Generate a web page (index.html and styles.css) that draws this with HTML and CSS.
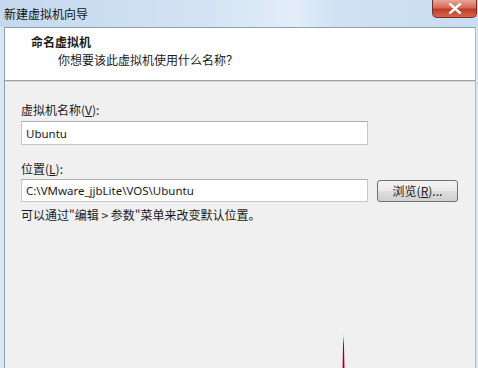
FILE: index.html
```html
<!DOCTYPE html>
<html lang="zh-CN">
<head>
    <meta charset="UTF-8">
    <title>新建虚拟机向导</title>
    <link rel="stylesheet" href="styles.css">
</head>
<body>
    <div class="window">
        <div class="titlebar">
            <span class="title">新建虚拟机向导</span>
            <button class="close-btn" aria-label="关闭">
                <svg width="14" height="11" viewBox="0 0 14 11">
                    <path d="M2 1 L12 10 M12 1 L2 10" stroke="#ffffff" stroke-width="2.4" stroke-linecap="round"/>
                </svg>
            </button>
        </div>
        <div class="frame">
            <div class="panel">
                <div class="header">
                    <div class="header-title">命名虚拟机</div>
                    <div class="header-sub">你想要该此虚拟机使用什么名称？</div>
                </div>
                <div class="content">
                    <label class="field-label" for="vmName">虚拟机名称(<u>V</u>):</label>
                    <input class="text-input" id="vmName" type="text" value="Ubuntu" spellcheck="false">

                    <label class="field-label field-gap" for="vmPath">位置(<u>L</u>):</label>
                    <div class="path-row">
                        <input class="text-input path-input" id="vmPath" type="text" value="C:\VMware_jjbLite\VOS\Ubuntu" spellcheck="false">
                        <button class="browse-btn">浏览(<u>R</u>)...</button>
                    </div>
                    <div class="hint">可以通过"编辑 &gt; 参数"菜单来改变默认位置。</div>
                </div>
            </div>
        </div>
    </div>
    <!-- 截图上的红色标注箭头 -->
    <div class="mark"></div>
</body>
</html>
```

FILE: styles.css
```css
* {
    box-sizing: border-box;
}

body {
    margin: 0;
    width: 478px;
    height: 368px;
    overflow: hidden;
    font-family: "Noto Sans CJK SC", "Noto Sans", sans-serif;
    font-size: 12px;
    color: #1a1a1a;
}

.window {
    display: flex;
    flex-direction: column;
    height: 368px;
    background: #d9e6f3;
}

.titlebar {
    height: 27px;
    display: flex;
    justify-content: space-between;
    align-items: flex-start;
    background: linear-gradient(90deg, #c4d8ee 0%, #d2e2f3 40%, #e2edf8 62%, #d0e1f3 70%, #c9dcf0 100%);
}

.title {
    padding: 5px 0 0 4px;
    line-height: 17px;
    color: #111;
}

.close-btn {
    width: 45px;
    height: 18px;
    margin-right: 1px;
    padding: 0;
    display: flex;
    align-items: center;
    justify-content: center;
    border: 1px solid #7a2a20;
    border-top: none;
    border-radius: 0 0 5px 5px;
    background: linear-gradient(180deg, #e9a594 0%, #d66a55 45%, #c23a24 55%, #d5654d 100%);
}

.frame {
    flex: 1;
    display: flex;
    padding: 0 2px 0 4px;
}

.panel {
    flex: 1;
    display: flex;
    flex-direction: column;
    border-left: 1px solid #8d9fb3;
    border-top: 1px solid #8d9fb3;
    border-right: 1px solid #a9b9cb;
    background: #f0f0f0;
}

.header {
    height: 53px;
    padding: 5px 0 0 26px;
    background: #ffffff;
    border-bottom: 1px solid #a0a0a0;
    box-shadow: 0 1px 0 #d8d8d8;
}

.header-title {
    font-weight: bold;
    line-height: 18px;
}

.header-sub {
    line-height: 18px;
    padding-left: 27px;
}

.content {
    display: flex;
    flex-direction: column;
    padding: 21px 0 0 16px;
}

.field-label {
    display: block;
    line-height: 16px;
    margin-bottom: 3px;
}

.field-gap {
    margin-top: 16px;
    margin-bottom: 2px;
}

.text-input {
    width: 347px;
    height: 24px;
    padding: 0 4px;
    border: 1px solid #c5c8cc;
    border-top-color: #abadb3;
    background: #ffffff;
    font-family: "Noto Sans", "Noto Sans CJK SC", sans-serif;
    font-size: 11.5px;
    color: #1a1a1a;
    outline: none;
}

.path-row {
    display: flex;
    align-items: center;
    gap: 9px;
}

.path-input {
    height: 23px;
}

.browse-btn {
    width: 81px;
    height: 22px;
    padding: 0;
    border: 1px solid #707070;
    border-radius: 3px;
    background: linear-gradient(180deg, #f4f4f4 0%, #ebebeb 48%, #dddddd 52%, #d0d0d0 100%);
    font-family: "Noto Sans CJK SC", sans-serif;
    font-size: 12px;
    color: #1a1a1a;
}

.hint {
    margin-top: 5px;
    line-height: 16px;
}

.mark {
    position: absolute;
    left: 342px;
    top: 335px;
    width: 3px;
    height: 33px;
    background: linear-gradient(90deg, #f4c4cc 0%, #a0001a 50%, #f4c4cc 100%);
    clip-path: polygon(50% 0, 100% 100%, 0 100%);
}
```
